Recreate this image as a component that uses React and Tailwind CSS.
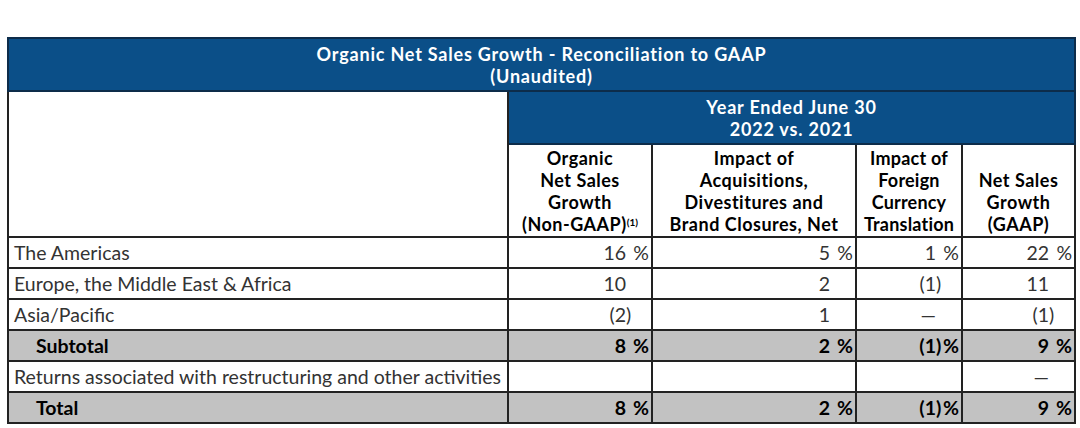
import React from "react";

const rows = [
  { label: "The Americas", cells: [["16", "pct"], ["5", "pct"], ["1", "pct"], ["22", "pct"]] },
  { label: "Europe, the Middle East & Africa", cells: [["10"], ["2"], ["(1", "paren"], ["11"]] },
  { label: "Asia/Pacific", cells: [["(2", "paren"], ["1"], ["—"], ["(1", "paren"]] },
  { label: "Subtotal", total: true, cells: [["8", "pct"], ["2", "pct"], ["(1", "parenpct"], ["9", "pct"]] },
  { label: "Returns associated with restructuring and other activities", cells: [[""], [""], [""], ["—"]] },
  { label: "Total", total: true, cells: [["8", "pct"], ["2", "pct"], ["(1", "parenpct"], ["9", "pct"]] },
];

// digits line up; ")" hangs into the suffix, "%" sits at the right edge
const Num = ({ value, kind }) => {
  const paren = kind === "paren" || kind === "parenpct";
  const pct = kind === "pct" || kind === "parenpct";
  return (
    <>
      <span>{value}</span>
      <span className="inline-block w-[7px] text-left">{paren ? ")" : "\u00a0"}</span>
      <span className="inline-block w-[16px] text-right">{pct ? "%" : "\u00a0"}</span>
    </>
  );
};

const App = () => {
  return (
    <div className="w-[1080px] h-[428px] bg-white pt-[37px] pl-[7px]" style={{ fontFamily: "Lato, 'Open Sans', sans-serif" }}>
      <table className="table-fixed border-collapse w-[1067px] text-[19.5px]">
        <colgroup>
          <col className="w-[500px]" />
          <col className="w-[144px]" />
          <col className="w-[204px]" />
          <col className="w-[106px]" />
          <col className="w-[113px]" />
        </colgroup>
        <thead>
          <tr className="h-[53px]">
            <th colSpan={5} className="bg-[#0b4f88] border-2 border-[#0d2c4a] text-white text-[18px] tracking-[0.8px] font-bold leading-[22px] text-center">
              Organic Net Sales Growth - Reconciliation to GAAP
              <br />
              (Unaudited)
            </th>
          </tr>
          <tr className="h-[53px]">
            <th rowSpan={2} className="bg-white border-2 border-[#222]"></th>
            <th colSpan={4} className="bg-[#0b4f88] border-2 border-[#0d2c4a] text-white text-[18px] tracking-[0.8px] font-bold leading-[22px] text-center">
              Year Ended June 30
              <br />
              2022 vs. 2021
            </th>
          </tr>
          <tr className="h-[93px] text-[18px] tracking-[0.5px]">
            <th className="border-2 border-[#222] align-bottom pb-[1px] font-bold leading-[22px] text-black">
              Organic
              <br />
              Net Sales
              <br />
              Growth
              <br />
              (Non-GAAP)<sup className="text-[10px] font-bold tracking-normal">(1)</sup>
            </th>
            <th className="border-2 border-[#222] align-bottom pb-[1px] font-bold leading-[22px] text-black">
              Impact of
              <br />
              Acquisitions,
              <br />
              Divestitures and
              <br />
              Brand Closures, Net
            </th>
            <th className="border-2 border-[#222] align-bottom pb-[1px] font-bold leading-[22px] text-black tracking-[0.2px]">
              Impact of
              <br />
              Foreign
              <br />
              Currency
              <br />
              Translation
            </th>
            <th className="border-2 border-[#222] align-bottom pb-[1px] font-bold leading-[22px] text-black">
              Net Sales
              <br />
              Growth
              <br />
              (GAAP)
            </th>
          </tr>
        </thead>
        <tbody>
          {rows.map((r) => (
            <tr key={r.label} className={`h-[31px] ${r.total ? "bg-[#c2c2c2]" : "bg-white"}`}>
              <td
                className={`border-2 border-[#222] leading-[20px] whitespace-nowrap ${
                  r.total ? "pl-[27px] font-bold text-black" : "pl-[5px] text-[#333]"
                }`}
              >
                {r.label}
              </td>
              {r.cells.map(([v, k], i) => (
                <td
                  key={i}
                  className={`border-2 border-[#222] text-right pr-[2px] leading-[20px] whitespace-nowrap ${
                    r.total ? "font-bold text-black" : "text-[#333]"
                  }`}
                >
                  {v !== "" && <Num value={v} kind={k} />}
                </td>
              ))}
            </tr>
          ))}
        </tbody>
      </table>
    </div>
  );
};

export default App;
